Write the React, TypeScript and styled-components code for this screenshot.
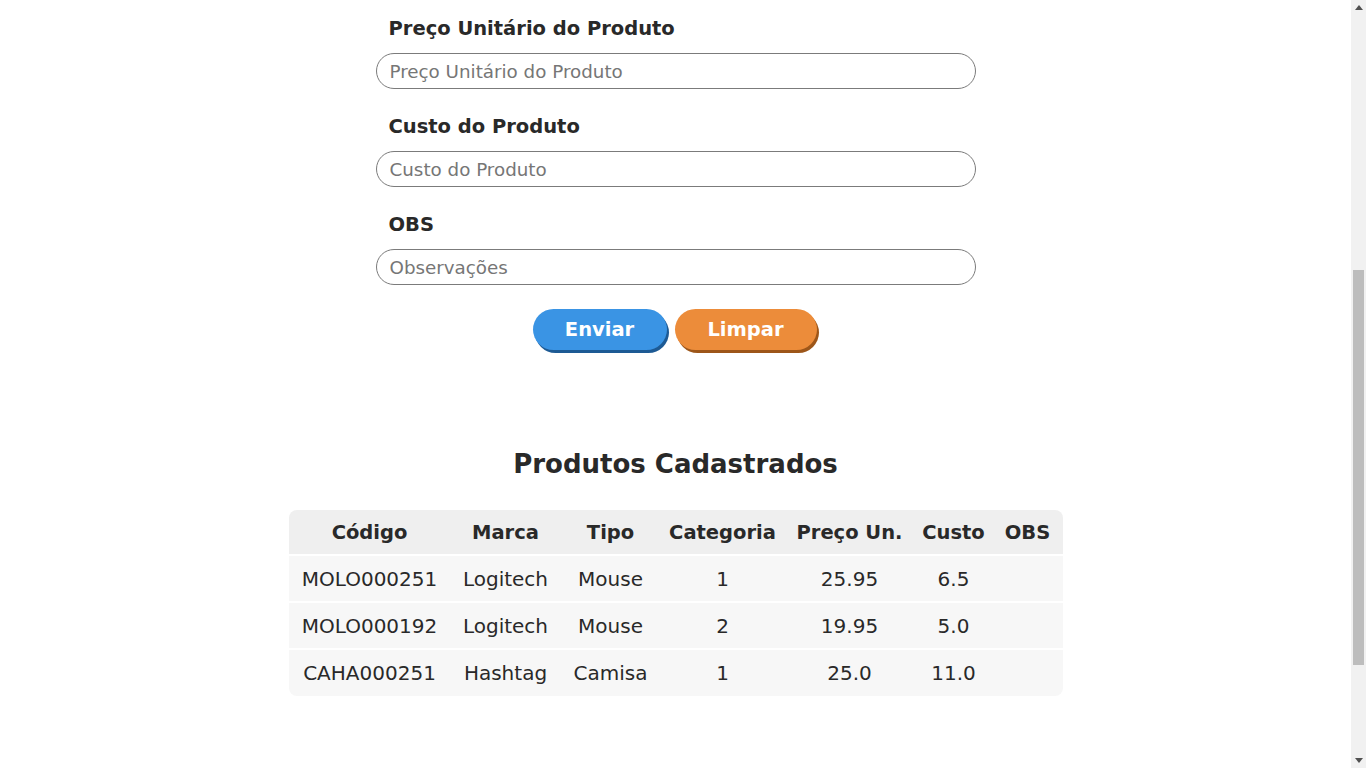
import React from "react";
import styled, { createGlobalStyle } from "styled-components";

const Global = createGlobalStyle`
  html, body { overflow: hidden; }
  body {
    margin: 0;
    background: #ffffff;
    color: #292929;
    font-family: "DejaVu Sans", "Liberation Sans", sans-serif;
  }
  * { box-sizing: border-box; }
`;

const Page = styled.main`
  width: calc(100% - 15px);
  display: flex;
  flex-direction: column;
  align-items: center;
  padding: 15px 0 60px;
`;

const Form = styled.form`
  width: 600px;
  display: flex;
  flex-direction: column;
  gap: 24px;
`;

const Field = styled.div`
  display: flex;
  flex-direction: column;
  gap: 12px;
`;

const Label = styled.label`
  padding: 2px 0 0 13px;
  font-size: 19.5px;
  line-height: 24px;
  font-weight: 700;
  color: #292929;
`;

const Input = styled.input`
  width: 600px;
  height: 36px;
  border: 1px solid #7b7b7b;
  border-radius: 18px;
  padding: 0 13px;
  font-family: inherit;
  font-size: 18.3px;
  color: #292929;
  background: #fff;
  outline: none;
  &::placeholder { color: #767676; }
`;

const Actions = styled.div`
  display: flex;
  justify-content: center;
  gap: 8px;
  padding-right: 2px;
`;

const Button = styled.button<{ $bg: string; $shade: string; $w: number }>`
  width: ${(p) => p.$w}px;
  height: 41px;
  border: none;
  border-radius: 21px;
  background: ${(p) => p.$bg};
  box-shadow: 2px 3px 0 ${(p) => p.$shade};
  color: #ffffff;
  font-family: inherit;
  font-size: 19.5px;
  font-weight: 700;
  cursor: pointer;
`;

const SectionTitle = styled.h2`
  margin: 98px 0 30px;
  font-size: 26px;
  line-height: 32px;
  font-weight: 700;
  color: #292929;
`;

const TableWrap = styled.div`
  width: 774px;
  border-radius: 8px;
  overflow: hidden;
`;

const Table = styled.table`
  width: 100%;
  border-collapse: collapse;
  table-layout: fixed;
`;

const Th = styled.th`
  height: 45px;
  padding: 0;
  background: #efefef;
  font-size: 19.5px;
  font-weight: 700;
  text-align: center;
  color: #292929;
  white-space: nowrap;
`;

const Td = styled.td`
  height: 47px;
  padding: 0;
  border-top: 2px solid #ffffff;
  background: #f7f7f7;
  font-size: 20px;
  font-weight: 400;
  text-align: center;
  color: #292929;
  white-space: nowrap;
`;

/* drawing of the browser's vertical scrollbar, which lies over the page edge */
const ScrollBar = styled.div`
  position: fixed;
  top: 0;
  right: 0;
  width: 15px;
  height: 100vh;
  background: #f1f1f1;
  display: flex;
  flex-direction: column;
`;

const Arrow = styled.div`
  height: 15px;
  display: flex;
  align-items: center;
  justify-content: center;
  flex: none;
`;

const Track = styled.div`
  flex: 1;
  padding: 255px 2px 0;
`;

const Thumb = styled.div`
  height: 395px;
  background: #bdbdbd;
`;

const columns: { key: string; label: string; width: number }[] = [
  { key: "codigo", label: "Código", width: 162 },
  { key: "marca", label: "Marca", width: 110 },
  { key: "tipo", label: "Tipo", width: 100 },
  { key: "categoria", label: "Categoria", width: 124 },
  { key: "preco", label: "Preço Un.", width: 130 },
  { key: "custo", label: "Custo", width: 78 },
  { key: "obs", label: "OBS", width: 70 },
];

const rows = [
  { codigo: "MOLO000251", marca: "Logitech", tipo: "Mouse", categoria: "1", preco: "25.95", custo: "6.5", obs: "" },
  { codigo: "MOLO000192", marca: "Logitech", tipo: "Mouse", categoria: "2", preco: "19.95", custo: "5.0", obs: "" },
  { codigo: "CAHA000251", marca: "Hashtag", tipo: "Camisa", categoria: "1", preco: "25.0", custo: "11.0", obs: "" },
];

const fields = [
  { label: "Preço Unitário do Produto", placeholder: "Preço Unitário do Produto" },
  { label: "Custo do Produto", placeholder: "Custo do Produto" },
  { label: "OBS", placeholder: "Observações" },
];

export default function App() {
  return (
    <>
      <Global />
      <Page>
        <Form onSubmit={(e) => e.preventDefault()}>
          {fields.map((f) => (
            <Field key={f.label}>
              <Label>{f.label}</Label>
              <Input placeholder={f.placeholder} />
            </Field>
          ))}
          <Actions>
            <Button type="submit" $bg="#3a94e4" $shade="#1d5a94" $w={134}>Enviar</Button>
            <Button type="reset" $bg="#ec8c3a" $shade="#9d5619" $w={142}>Limpar</Button>
          </Actions>
        </Form>
        <SectionTitle>Produtos Cadastrados</SectionTitle>
        <TableWrap>
          <Table>
            <colgroup>
              {columns.map((c) => (
                <col key={c.key} style={{ width: c.width }} />
              ))}
            </colgroup>
            <thead>
              <tr>
                {columns.map((c) => (
                  <Th key={c.key}>{c.label}</Th>
                ))}
              </tr>
            </thead>
            <tbody>
              {rows.map((r) => (
                <tr key={r.codigo}>
                  {columns.map((c) => (
                    <Td key={c.key}>{(r as Record<string, string>)[c.key]}</Td>
                  ))}
                </tr>
              ))}
            </tbody>
          </Table>
        </TableWrap>
      </Page>
      <ScrollBar aria-hidden="true">
        <Arrow>
          <svg width="8" height="5" viewBox="0 0 8 5"><path d="M0 5 L4 0 L8 5 Z" fill="#505050" /></svg>
        </Arrow>
        <Track>
          <Thumb />
        </Track>
        <Arrow>
          <svg width="8" height="5" viewBox="0 0 8 5"><path d="M0 0 L8 0 L4 5 Z" fill="#505050" /></svg>
        </Arrow>
      </ScrollBar>
    </>
  );
}
